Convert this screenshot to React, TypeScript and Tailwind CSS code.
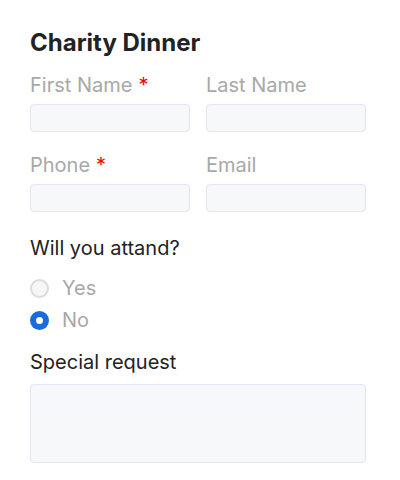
import React from "react";

const Field = ({ label, required }: { label: string; required?: boolean }) => {
  return (
    <div className="flex flex-col">
      <label className="h-[28px] leading-[28px] text-[20px] text-[#a8a8a8]">
        {label}
        {required && <span className="ml-[6px] text-[#ff0000]">*</span>}
      </label>
      <input className="mt-[5px] h-[28px] w-full rounded-[4px] border border-[#e2e4fa] bg-[#f7f8fa] outline-none" />
    </div>
  );
};

const Radio = ({ label, checked }: { label: string; checked?: boolean }) => {
  return (
    <div className="flex h-[32px] items-center gap-[13px]">
      {checked ? (
        <span className="flex h-[19px] w-[19px] items-center justify-center rounded-full bg-[#1a6bdc]">
          <span className="h-[7px] w-[7px] rounded-full bg-white" />
        </span>
      ) : (
        <span className="h-[19px] w-[19px] rounded-full border-2 border-[#dcdcdc] bg-[#f6f6f6]" />
      )}
      <span className="text-[20px] text-[#a8a8a8]">{label}</span>
    </div>
  );
};

const App = () => {
  return (
    <div
      className="h-[480px] w-[400px] bg-white px-[30px] pt-[27px]"
      style={{ fontFamily: "Inter, 'Noto Sans', sans-serif" }}
    >
      <h1 className="h-[32px] text-[24px] font-bold leading-[32px] text-[#222222]">
        Charity Dinner
      </h1>
      <div className="mt-[12px] grid grid-cols-2 gap-x-[16px] gap-y-[19px] pr-[4px]">
        <Field label="First Name" required />
        <Field label="Last Name" />
        <Field label="Phone" required />
        <Field label="Email" />
      </div>
      <div className="mt-[22px] h-[28px] text-[20px] leading-[28px] text-[#222222]">
        Will you attand?
      </div>
      <div className="mt-[10px] flex flex-col">
        <Radio label="Yes" />
        <Radio label="No" checked />
      </div>
      <div className="mt-[12px] h-[28px] text-[20px] leading-[28px] text-[#222222]">
        Special request
      </div>
      <textarea className="mt-[8px] block h-[79px] w-[336px] resize-none rounded-[4px] border border-[#e2e4fa] bg-[#f7f8fa] outline-none" />
    </div>
  );
};

export default App;
